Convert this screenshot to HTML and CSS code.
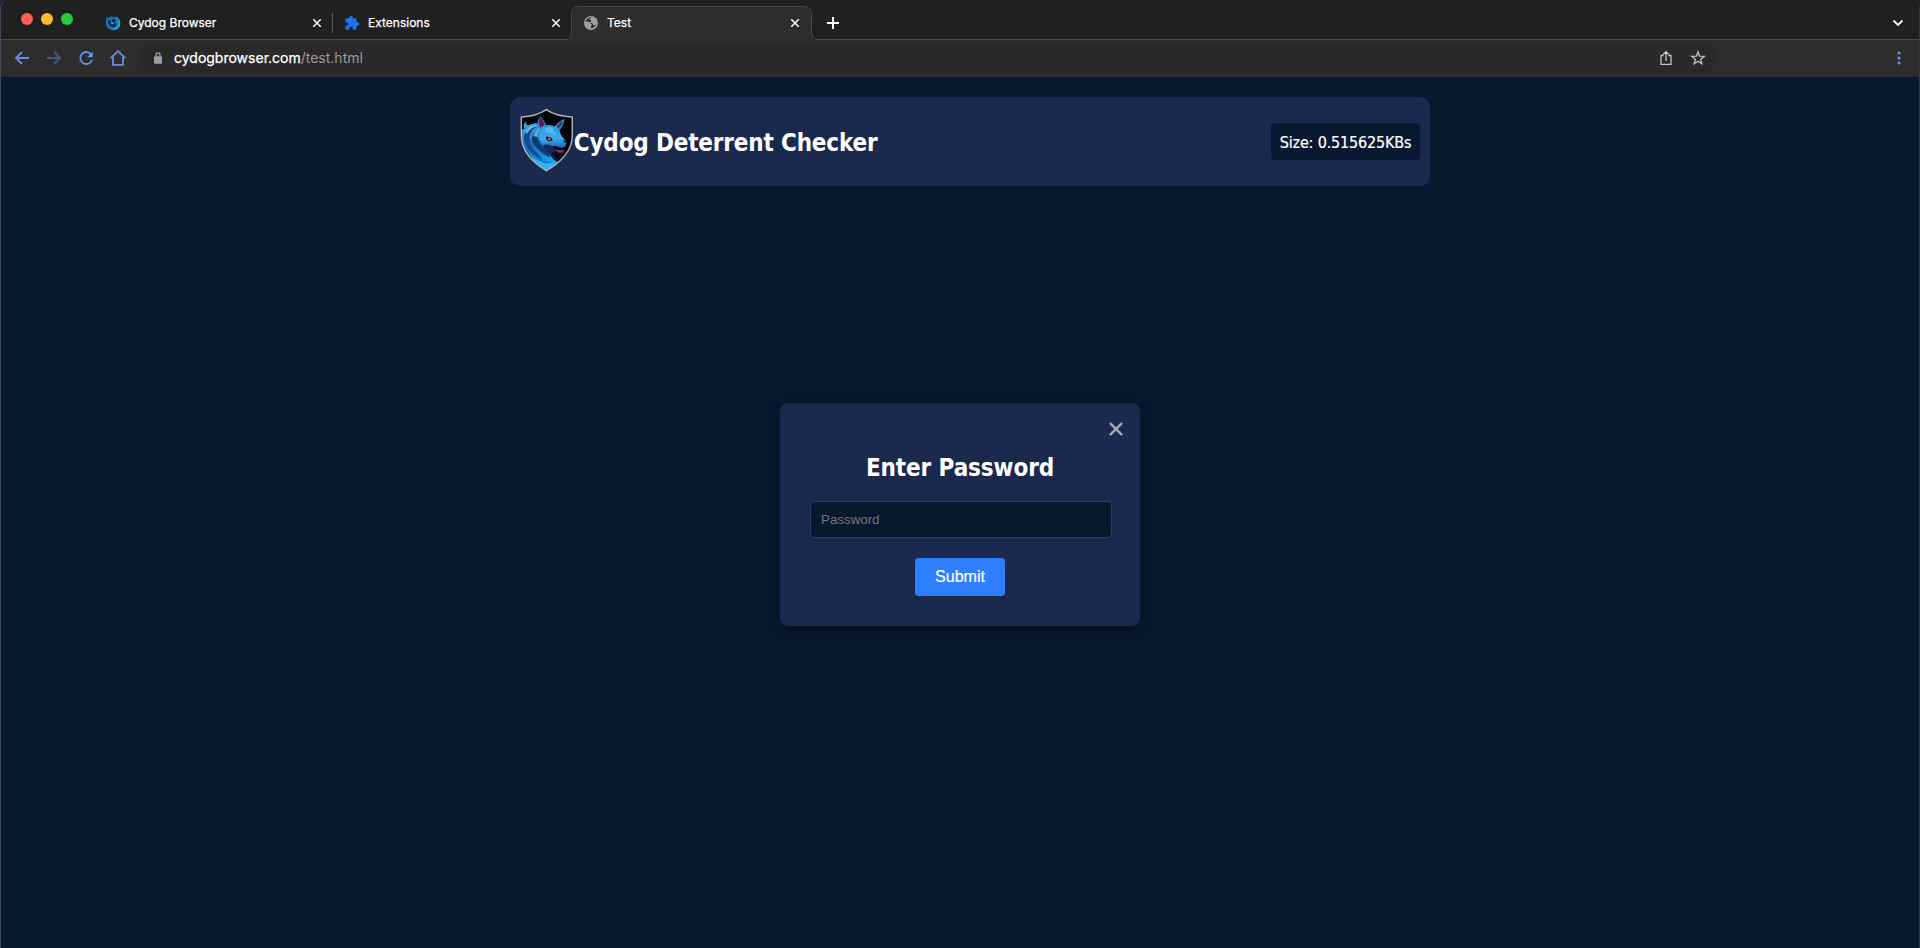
FILE: index.html
```html
<!DOCTYPE html>
<html lang="en">
<head>
<meta charset="utf-8">
<title>Test</title>
<link rel="stylesheet" href="styles.css">
</head>
<body>
<div class="window">
  <div class="tabstrip">
    <div class="lights"><i class="light red"></i><i class="light yellow"></i><i class="light green"></i></div>
    <div class="tab">
      <svg class="favicon" viewBox="0 0 16 16"><circle cx="8.3" cy="8.2" r="6.9" fill="#0d527f"/><path d="M1.8 1.5 4 3.2 6.5 1l1.4 2.3L11 1.5c3 1.2 4.5 4 4.2 7.200C15 13 11 15.600 7.500 15.200 3 14.600.6 11 .8 7.300z" fill="#1477b2"/><path d="M3.500 4.500 6 6.200l3-3 1.500 2.300L9.800 8 12 10l-2.500 2.500L5 11.300 3 8z" fill="#082c55"/><path d="M10.500 1.500c3 2 3.900 5.300 2.500 8.500-1.300 2.800-4.300 4-7 3 3.500 3.200 8.800 1.200 9.200-4 .2-3.500-1.500-6.200-4.700-7.500z" fill="#2ba6dc"/><path d="m6 5.500 1 2 2.500-.5L8 9.500 6 8.500z" fill="#35afe1"/></svg>
      <span class="tab-title">Cydog Browser</span>
      <svg class="tab-close" viewBox="0 0 10 10"><path d="m1.300 1.300 7.400 7.400m0-7.400L1.300 8.700"/></svg>
    </div>
    <div class="tab tab-divided">
      <svg class="favicon" viewBox="0 0 24 24"><path fill="#1a73e8" d="M20.500 11H19V7c0-1.100-.9-2-2-2h-4V3.500a2.500 2.500 0 0 0-5 0V5H4c-1.100 0-2 .9-2 2v3.800h1.500a2.700 2.700 0 0 1 0 5.400H2V20c0 1.100.9 2 2 2h3.800v-1.500a2.700 2.700 0 0 1 5.400 0V22H17c1.100 0 2-.9 2-2v-4h1.500a2.500 2.500 0 0 0 0-5z"/></svg>
      <span class="tab-title">Extensions</span>
      <svg class="tab-close" viewBox="0 0 10 10"><path d="m1.300 1.300 7.400 7.400m0-7.400L1.300 8.700"/></svg>
    </div>
    <div class="tab tab-active">
      <svg class="tab-shape" viewBox="0 0 256 35"><path class="fill" d="M0 34.500c5 0 8-3 8-8v-18c0-5 3-8 8-8h224c5 0 8 3 8 8v18c0 5 3 8 8 8v.5H0z"/><path class="edge" d="M0 33.500c5 0 7.500-3 7.500-8v-17c0-5 3-8 8-8h224c5 0 8 3 8 8v17c0 5 3 8 8 8"/></svg>
      <svg class="favicon" viewBox="0 0 16 16"><circle cx="8" cy="8" r="7" fill="#9aa0a6"/><path d="M8.900 2.500c-1 .6-2.200.8-2.200 1.700 0 1 1.600.6 1.600 1.700 0 .9-1.500.7-1.500 1.600 0 .8 1.900.5 2.700 1 1 .7.3 1.700 1.300 1.900 1 .2 1.900-.8 2.300-1.700-.3 2.400-2.300 4.400-5.400 4.600v-1.500c0-1-1.200-.8-1.600-1.700-.5-1 .1-1.700-.8-2.200L2.600 7.100C3 4.200 5.500 2.200 8.900 2.500z" fill="#2d2d2d"/><path d="m2.200 6.500 4 .2c1.500.3.900 1.800 1.800 2.200.8.4 1.200 1 .6 1.700-.6.600-.4 1.800-.8 2.500-3.500 0-5.700-3.200-5.600-6.600z" fill="#9aa0a6"/></svg>
      <span class="tab-title">Test</span>
      <svg class="tab-close" viewBox="0 0 10 10"><path d="m1.300 1.300 7.400 7.400m0-7.400L1.300 8.700"/></svg>
    </div>
    <svg class="new-tab" viewBox="0 0 12 12"><path d="M6 0v12M0 6h12"/></svg>
    <svg class="tab-search" viewBox="0 0 12 8"><path d="m1.500 1.500 4.500 4.500 4.500-4.500"/></svg>
  </div>

  <div class="toolbar">
    <svg class="nav" viewBox="0 0 16 16"><path d="M15 8H2M8 2 2 8l6 6"/></svg>
    <svg class="nav dim" viewBox="0 0 16 16"><path d="M1 8h13M8 2l6 6-6 6"/></svg>
    <svg class="nav" viewBox="0 0 16 16"><path d="M13 4.200A6 6 0 1 0 14 10"/><path d="M14.800 1.500v5.800H9z" fill="#6390e4" stroke="none"/></svg>
    <svg class="nav" viewBox="0 0 16 16"><path d="M.8 8.200 8 1.200l7.200 7M3 7v7.900h10V7"/></svg>
    <div class="omnibox">
      <svg class="lock" viewBox="0 0 8 12"><path d="M2 5V3a2 2 0 0 1 4 0v2" fill="none" stroke="#9aa0a6" stroke-width="1.300"/><rect y="4.300" width="8" height="7.400" rx="1" fill="#9aa0a6"/></svg>
      <span class="url"><span class="host">cydogbrowser.com</span><span class="path">/test.html</span></span>
      <svg class="action share" viewBox="0 0 16 16"><path d="M5.500 5.500H3v8.900h10V5.500h-2.500M8 11V2M5 4.600l3-3 3 3"/></svg>
      <svg class="action" viewBox="0 0 16 16"><path d="m8 1.900 1.600 4.200 4.700.3-3.600 2.900 1.200 4.500L8 11.300l-3.900 2.500 1.200-4.500-3.600-2.900 4.700-.3z"/></svg>
    </div>
    <svg class="menu" viewBox="0 0 4 14"><circle cx="2" cy="2" r="1.600"/><circle cx="2" cy="7" r="1.600"/><circle cx="2" cy="12" r="1.600"/></svg>
  </div>

  <main class="page">
    <header class="header">
      <div class="brand">
        <svg class="logo" viewBox="30 24 160 192">
          <defs>
            <clipPath id="shield"><path d="M109 31C90 42 62 50 34 51v55c0 44 31 80 75 106 45-25 78-62 78-106V51c-28-1-59-9-78-20z"/></clipPath>
            <linearGradient id="fur" x1="0" y1="0" x2=".3" y2="1"><stop offset="0" stop-color="#4fb4ea"/><stop offset=".5" stop-color="#1671bd"/><stop offset="1" stop-color="#15aff0"/></linearGradient>
            <linearGradient id="face" x1="0" y1="0" x2="0" y2="1"><stop offset="0" stop-color="#2c9ae0"/><stop offset=".6" stop-color="#38aef0"/><stop offset="1" stop-color="#1a63b4"/></linearGradient>
          </defs>
          <g clip-path="url(#shield)">
            <path fill="#020306" d="M30 24h160v192H30z"/>
            <path fill="url(#fur)" d="M50 62c-5 8-1 15 8 13 9-5 17-5 25-5l22 8 5 60c4 18 14 40 34 48l18-3c-4 11-8 18-16 26l-40 12-78-50V92l15-6c-4-9-1-18 7-24z"/>
            <path fill="#134b93" d="M42 108c6-16 20-27 38-28-17 10-24 24-20 44 5 24 24 36 36 52 6 9 0 17 8 22-28-4-62-38-62-90z"/>
            <path fill="#0e3773" d="M66 112c4-12 12-19 22-22-8 12-8 26 2 40 12 16 26 24 30 42-10-4-20-9-29-18-13-13-28-24-25-42z"/>
            <path fill="#7dcbf2" d="M46 94c10-14 24-20 38-19-14 5-26 13-33 26zm24 14c4-12 12-20 20-25-4 10-8 18-7 29z" opacity=".8"/>
            <path fill="#2489d3" d="M82 84c-2-14 2-26 9-36 8 8 16 20 19 34zm82-28c-2 16-8 26-16 36l-15-12c8-10 18-18 31-24z"/>
            <path fill="#6d1648" d="M90 50c8 8 13 19 14 29l-12 6c-5-11-7-23-2-35z"/>
            <path fill="#5b225a" d="M158 64c-2 9-6 15-12 22l-7-5c5-7 12-13 19-17z"/>
            <path fill="url(#face)" d="M90 84c9-9 21-10 31-9l21 6 8 14c2 8 5 13 11 20l8 11-2 13-12 5-17-5c-14-3-20 6-37 1-12-14-18-34-11-56z"/>
            <path fill="#64c5fa" d="M105 86c7-5 16-6 23-3l9 18-1 7-13-8-17-3z" opacity=".7"/>
            <path fill="#142663" d="M98 137c14-8 24-2 33 6 10 8 20 10 31 4l-4 14c-10 2-18-4-26-9 3 15 14 25 25 31-25-1-44-24-59-46z"/>
            <path fill="#070b1e" d="M122 152c10 10 21 14 36 13l-8 17c-14-6-25-17-28-30z"/>
            <path fill="#a72557" d="M135 146c11 6 19 7 28 1l-3 8c-9 4-17 1-25-9z"/>
            <path fill="#14244e" d="M160 121c6 0 10 3 9 8l-8-2z"/>
            <path fill="#28b4f5" d="M57 155c13 21 30 29 58 30l29 4-24 18-14 2c-19-9-38-28-49-54z"/>
            <path fill="#147cc7" d="M46 128c6 22 23 37 44 47 12 6 18 11 38 11-12 8-34 2-52-10-18-13-30-29-30-48z"/>
            <path fill="#26143f" d="m109 109 17 6 2 7-12 2-8-7z"/><path fill="#ff4b35" d="m114 113 9 3-1 5-7-1z"/>
          </g>
          <path fill="none" stroke="#afb0b4" stroke-width="4.500" stroke-linejoin="round" d="M109 29C90 42 62 50 34 51v55c0 44 31 80 75 106 45-25 78-62 78-106V51c-28-1-59-9-78-22z"/>
        </svg>
        <h1 class="title">Cydog Deterrent Checker</h1>
      </div>
      <div class="size"><span>Size: 0.515625KBs</span></div>
    </header>
    <section class="modal">
      <svg class="modal-close" viewBox="0 0 14 14"><path d="m1.600 1.600 10.800 10.800m0-10.800L1.600 12.400"/></svg>
      <h2 class="modal-title">Enter Password</h2>
      <input class="password" type="password" placeholder="Password">
      <button class="submit">Submit</button>
    </section>
  </main>
</div>
</body>
</html>
```
FILE: styles.css
```css
* { box-sizing: border-box; }
html { background: #1c2733; }
body { margin: 0; overflow: hidden; font-family: Inter, "Liberation Sans", sans-serif; }
svg { display: block; flex: none; }

.window {
  height: 948px;
  display: flex;
  flex-direction: column;
  background: #08182e;
  border-left: 1px solid #414b5a;
  border-right: 1px solid #293747;
  border-radius: 9px 9px 0 0;
  overflow: hidden;
}

.tabstrip {
  height: 40px;
  flex: none;
  display: flex;
  align-items: flex-start;
  background: #202020;
  border-bottom: 1px solid #484848;
}
.lights { display: flex; gap: 8px; padding: 13px 0 0 20px; width: 95px; }
.light { width: 12px; height: 12px; border-radius: 50%; }
.red { background: #ff5f57; }
.yellow { background: #febc2e; }
.green { background: #28c840; }
.tab {
  position: relative;
  width: 239px;
  height: 34px;
  margin-top: 6px;
  padding: 0 13px 0 9px;
  display: flex;
  align-items: center;
}
.tab-divided::before {
  content: "";
  position: absolute;
  left: -3px;
  top: 7px;
  width: 1px;
  height: 20px;
  background: #595959;
}
.tab-shape { position: absolute; left: -10px; top: 0; width: 256px; height: 35px; }
.tab-shape .fill { fill: #2d2d2d; }
.tab-shape .edge { fill: none; stroke: #484848; }
.favicon { position: relative; width: 16px; height: 16px; }
.tab-title {
  position: relative;
  flex: 1;
  margin-left: 8px;
  color: #fff;
  font-size: 12px;
  line-height: 16px;
  -webkit-text-stroke: .25px #fff;
}
.tab-close { position: relative; width: 10px; height: 10px; fill: none; stroke: #f2f2f2; stroke-width: 1.600; }
.new-tab { width: 12px; height: 12px; margin: 17px 0 0 14px; stroke: #fff; stroke-width: 2; }
.tab-search { width: 12px; height: 8px; margin: 19px 15px 0 auto; fill: none; stroke: #fff; stroke-width: 1.800; }

.toolbar {
  height: 37px;
  flex: none;
  display: flex;
  align-items: center;
  gap: 16px;
  padding: 0 18px 1px 13px;
  background: #2d2d2d;
}
.nav { width: 16px; height: 16px; fill: none; stroke: #6390e4; stroke-width: 1.800; }
.dim { stroke: #435987; }
.omnibox {
  width: 1577px;
  height: 28px;
  margin-left: -3px;
  padding: 0 10px 0 15px;
  display: flex;
  align-items: center;
  border-radius: 14px;
  background: #292929;
}
.lock { width: 8px; height: 12px; margin-top: -1px; }
.url { flex: 1; margin-left: 12px; font-size: 14px; line-height: 20px; white-space: nowrap; }
.host { color: #fff; -webkit-text-stroke: .25px #fff; }
.path { color: #9a9a9a; }
.action { width: 16px; height: 16px; fill: none; stroke: #c4c4c4; stroke-width: 1.300; }
.share { margin-right: 16px; }
.menu { width: 4px; height: 14px; margin-left: auto; fill: #6390e4; }

.page {
  flex: 1;
  display: flex;
  flex-direction: column;
  align-items: center;
  padding-top: 20px;
  font-family: "DejaVu Sans Condensed", "DejaVu Sans", sans-serif;
  color: #fff;
}
.header {
  width: 920px;
  height: 89px;
  margin-left: 20px;
  padding: 10px;
  display: flex;
  align-items: center;
  justify-content: space-between;
  background: #1c294e;
  border-radius: 10px;
}
.brand { display: flex; align-items: center; }
.logo { width: 53.300px; height: 64px; margin-top: -3px; }
.title { margin: 2px 0 0 .5px; font-size: 24px; line-height: 30px; letter-spacing: -.17px; white-space: nowrap; }
.size {
  width: 149px;
  height: 37px;
  padding-top: 2px;
  display: flex;
  align-items: center;
  justify-content: center;
  background: #08182e;
  border-radius: 4px;
  font-size: 16px;
  letter-spacing: -.17px;
  -webkit-text-stroke: .2px #fff;
  white-space: nowrap;
}
.modal {
  position: relative;
  width: 360px;
  height: 223px;
  margin-top: 217px;
  padding: 50px 30px 30px;
  display: flex;
  flex-direction: column;
  align-items: center;
  background: #1c294e;
  border-radius: 8px;
  box-shadow: 0 4px 8px rgba(0, 0, 0, .3);
}
.modal-close { position: absolute; top: 19px; right: 17px; width: 14px; height: 14px; stroke: #aaa; stroke-width: 2.300; stroke-linecap: round; }
.modal-title { margin: 0 0 18px; font-size: 24px; line-height: 30px; letter-spacing: -.1px; white-space: nowrap; }
.password {
  width: 302px;
  height: 37px;
  flex: none;
  margin-left: 2px;
  padding: 0 10px;
  background: #08182e;
  border: 1px solid #2c3a63;
  border-radius: 4px;
  color: #fff;
  font: 13.333px "Liberation Sans", sans-serif;
}
.password::placeholder { color: #757575; }
.submit {
  width: 90px;
  height: 38px;
  margin-top: 20px;
  padding: 0 0 1px;
  flex: none;
  border: 0;
  border-radius: 4px;
  background: #2d7fff;
  color: #fff;
  font: 16px "Liberation Sans", sans-serif;
  -webkit-text-stroke: .2px #fff;
}
```
